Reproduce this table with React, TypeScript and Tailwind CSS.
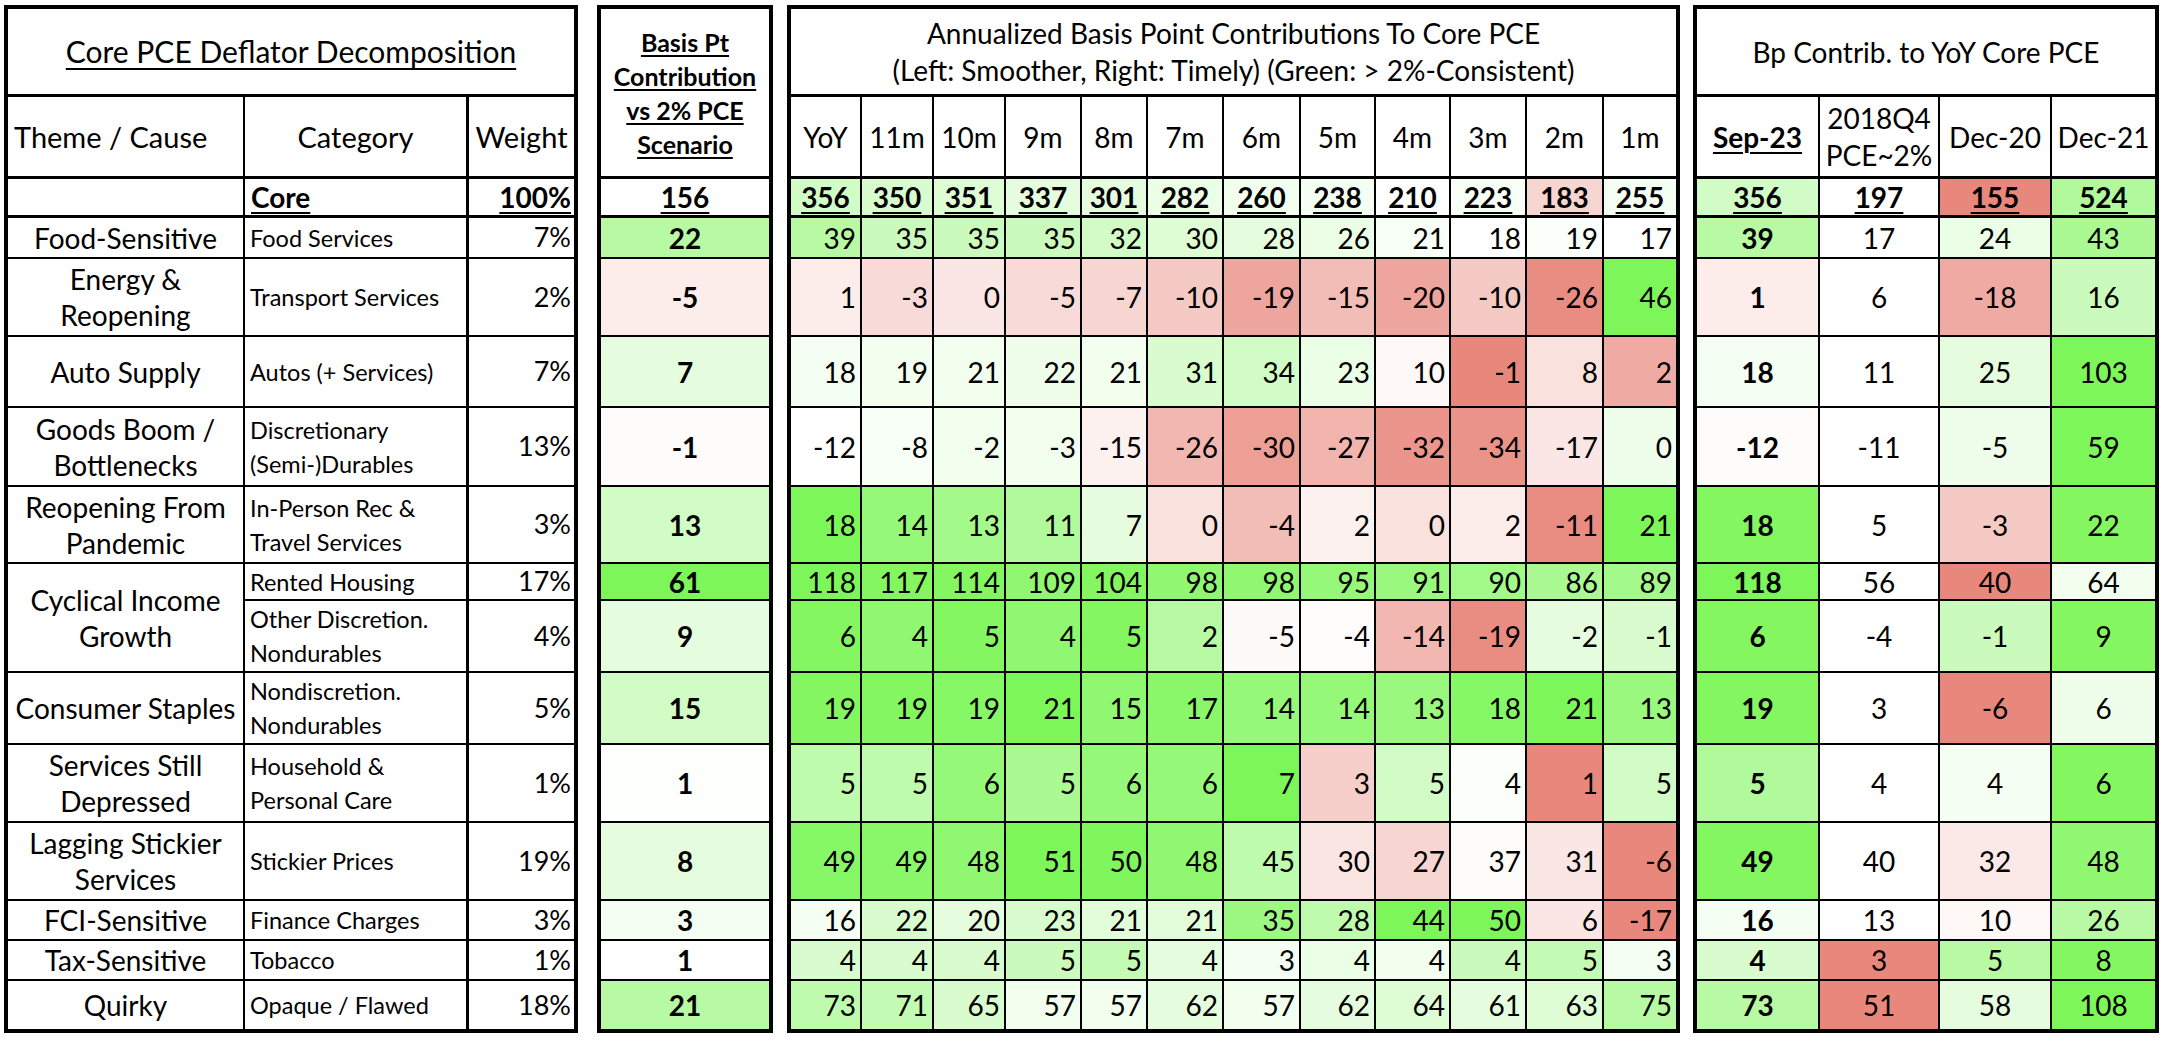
import React from 'react';

const GREEN = [124, 246, 88];
const RED = [232, 135, 124];
function bg(v: number): string {
  if (v === 0) return '#ffffff';
  const c = v > 0 ? GREEN : RED;
  const t = Math.min(1, Math.abs(v) / 100);
  const m = c.map((x) => Math.round(255 + (x - 255) * t));
  return `rgb(${m[0]},${m[1]},${m[2]})`;
}

type Row = {
  theme?: string[];
  span?: number;
  cat: string[];
  w: string;
  b: [string, number];
  a: string;
  ai: string;
  r: string;
  ri: string;
};

const rows: Row[] = [
  { theme: ['Food-Sensitive'], cat: ['Food Services'], w: '7%', b: ['22', 55], a: '39 35 35 35 32 30 28 26 21 18 19 17', ai: '55 40 40 40 35 25 20 15 5 0 3 0', r: '39 17 24 43', ri: '55 0 15 65' },
  { theme: ['Energy &', 'Reopening'], cat: ['Transport Services'], w: '2%', b: ['-5', -15], a: '1 -3 0 -5 -7 -10 -19 -15 -20 -10 -26 46', ai: '-15 -30 -20 -30 -35 -45 -75 -55 -75 -45 -95 100', r: '1 6 -18 16', ri: '-15 0 -70 40' },
  { theme: ['Auto Supply'], cat: ['Autos (+ Services)'], w: '7%', b: ['7', 20], a: '18 19 21 22 21 31 34 23 10 -1 8 2', ai: '8 10 10 12 10 30 35 15 -6 -100 -25 -70', r: '18 11 25 103', ri: '8 0 20 100' },
  { theme: ['Goods Boom /', 'Bottlenecks'], cat: ['Discretionary', '(Semi-)Durables'], w: '13%', b: ['-1', -3], a: '-12 -8 -2 -3 -15 -26 -30 -27 -32 -34 -17 0', ai: '0 5 10 10 -12 -60 -80 -62 -88 -90 -20 12', r: '-12 -11 -5 59', ri: '-3 0 12 100' },
  { theme: ['Reopening From', 'Pandemic'], cat: ['In-Person Rec &', 'Travel Services'], w: '3%', b: ['13', 35], a: '18 14 13 11 7 0 -4 2 0 2 -11 21', ai: '100 80 70 60 20 -25 -55 -12 -25 -15 -95 100', r: '18 5 -3 22', ri: '95 0 -45 95' },
  { theme: ['Cyclical Income', 'Growth'], span: 2, cat: ['Rented Housing'], w: '17%', b: ['61', 100], a: '118 117 114 109 104 98 98 95 91 90 86 89', ai: '100 95 95 85 95 85 85 80 78 72 65 70', r: '118 56 40 64', ri: '100 0 -100 10' },
  { cat: ['Other Discretion.', 'Nondurables'], w: '4%', b: ['9', 20], a: '6 4 5 4 5 2 -5 -4 -14 -19 -2 -1', ai: '95 85 95 85 95 55 -4 -2 -60 -95 20 30', r: '6 -4 -1 9', ri: '95 0 40 95' },
  { theme: ['Consumer Staples'], cat: ['Nondiscretion.', 'Nondurables'], w: '5%', b: ['15', 35], a: '19 19 19 21 15 17 14 14 13 18 21 13', ai: '95 95 92 100 85 90 80 80 78 92 100 78', r: '19 3 -6 6', ri: '95 0 -100 12' },
  { theme: ['Services Still', 'Depressed'], cat: ['Household &', 'Personal Care'], w: '1%', b: ['1', 2], a: '5 5 6 5 6 6 7 3 5 4 1 5', ai: '50 50 80 65 80 80 100 -40 35 3 -100 35', r: '5 4 4 6', ri: '60 0 8 95' },
  { theme: ['Lagging Stickier', 'Services'], cat: ['Stickier Prices'], w: '19%', b: ['8', 20], a: '49 49 48 51 50 48 45 30 27 37 31 -6', ai: '92 90 85 100 97 85 50 -22 -35 -3 -20 -100', r: '49 40 32 48', ri: '95 0 -18 85' },
  { theme: ['FCI-Sensitive'], cat: ['Finance Charges'], w: '3%', b: ['3', 8], a: '16 22 20 23 21 21 35 28 44 50 6 -17', ai: '8 30 20 30 22 22 75 50 100 100 -20 -100', r: '16 13 10 26', ri: '8 0 -6 55' },
  { theme: ['Tax-Sensitive'], cat: ['Tobacco'], w: '1%', b: ['1', 0], a: '4 4 4 5 5 4 3 4 4 4 5 3', ai: '30 30 30 40 45 20 8 15 10 40 45 8', r: '4 3 5 8', ri: '30 -100 55 95' },
  { theme: ['Quirky'], cat: ['Opaque / Flawed'], w: '18%', b: ['21', 55], a: '73 71 65 57 57 62 57 62 64 61 63 75', ai: '50 45 30 10 10 20 10 20 25 20 25 55', r: '73 51 58 108', ri: '55 -100 20 100' },
];

const core = {
  a: '356 350 351 337 301 282 260 238 210 223 183 255',
  ai: '35 30 25 20 20 15 10 8 0 5 -35 8',
  r: '356 197 155 524',
  ri: '35 0 -100 60',
};

const sp = (s: string) => s.split(' ');
const spn = (s: string) => s.split(' ').map(Number);

const ROWS =
  'grid-rows-[88px_82px_39px_41px_78px_71px_79px_77px_37px_72px_72px_78px_78px_40px_40px_48px]';

const months = ['YoY', '11m', '10m', '9m', '8m', '7m', '6m', '5m', '4m', '3m', '2m', '1m'];

export default function App() {
  const n = rows.length;
  return (
    <div className="w-[2168px] h-[1048px] bg-white text-black font-['Lato',sans-serif] overflow-hidden">
      <div className="flex items-start pt-[5px] pl-[4px]">
        {/* Panel 1 */}
        <div className={`grid w-[574px] border-[4px] border-black grid-cols-[237px_224px_105px] ${ROWS}`}>
          <div className="col-span-3 border-b-[3px] border-black flex items-center justify-center text-[30px] underline decoration-2 underline-offset-[5px]">
            Core PCE Deflator Decomposition
          </div>
          <div className="border-b-[3px] border-r-2 border-black flex items-center pl-[6px] text-[29px]">Theme / Cause</div>
          <div className="border-b-[3px] border-r-[3px] border-black flex items-center justify-center text-[29px]">Category</div>
          <div className="border-b-[3px] border-black flex items-center justify-center text-[29px]">Weight</div>
          <div className="border-b-[3px] border-r-2 border-black"></div>
          <div className="border-b-[3px] border-r-[3px] border-black flex items-center pl-[6px] text-[28px] font-bold underline decoration-2 underline-offset-[4px]">Core</div>
          <div className="border-b-[3px] border-black flex items-center justify-end pr-[3px] text-[28px] font-bold underline decoration-2 underline-offset-[4px]">100%</div>
          {rows.map((r, i) => {
            const last = i === n - 1;
            return (
              <React.Fragment key={i}>
                {r.theme && (
                  <div
                    className={`${r.span === 2 ? 'row-span-2' : ''} ${last ? '' : 'border-b-2'} border-r-2 border-black flex flex-col items-center justify-center text-center text-[28px] leading-[36px] whitespace-nowrap`}
                  >
                    {r.theme.map((t, k) => (
                      <div key={k}>{t}</div>
                    ))}
                  </div>
                )}
                <div
                  className={`${last ? '' : 'border-b-2'} border-r-[3px] border-black flex flex-col justify-center pl-[5px] text-[23.5px] leading-[34px] whitespace-nowrap`}
                >
                  {r.cat.map((t, k) => (
                    <div key={k}>{t}</div>
                  ))}
                </div>
                <div className={`${last ? '' : 'border-b-2'} border-black flex items-center justify-end pr-[3px] text-[27px]`}>
                  {r.w}
                </div>
              </React.Fragment>
            );
          })}
        </div>

        {/* Panel 2 */}
        <div className={`ml-[19px] grid w-[176px] border-[4px] border-black grid-cols-[168px] ${ROWS}`}>
          <div className="row-span-2 border-b-[3px] border-black flex flex-col items-center justify-center text-[25px] leading-[34px] font-bold underline decoration-2 underline-offset-[3px] whitespace-nowrap">
            <div>Basis Pt</div>
            <div>Contribution</div>
            <div>vs 2% PCE</div>
            <div>Scenario</div>
          </div>
          <div className="border-b-[3px] border-black flex items-center justify-center text-[28px] font-bold underline decoration-2 underline-offset-[4px]">
            156
          </div>
          {rows.map((r, i) => (
            <div
              key={i}
              className={`${i === n - 1 ? '' : 'border-b-2'} border-black flex items-center justify-center text-[28px] font-bold`}
              style={{ backgroundColor: bg(r.b[1]) }}
            >
              {r.b[0]}
            </div>
          ))}
        </div>

        {/* Panel 3 */}
        <div
          className={`ml-[14px] grid w-[893px] border-[4px] border-black grid-cols-[71px_72px_72px_76px_66px_76px_77px_75px_75px_76px_77px_72px] ${ROWS}`}
        >
          <div className="col-span-12 border-b-[3px] border-black flex flex-col items-center justify-center text-[28px] leading-[37px]">
            <div>Annualized Basis Point Contributions To Core PCE</div>
            <div>(Left: Smoother, Right: Timely) (Green: &gt; 2%-Consistent)</div>
          </div>
          {months.map((m, j) => (
            <div
              key={m}
              className={`${j === 11 ? '' : 'border-r-2'} border-b-[3px] border-black flex items-center justify-center text-[28px]`}
            >
              {m}
            </div>
          ))}
          {sp(core.a).map((v, j) => (
            <div
              key={'c' + j}
              className={`${j === 11 ? '' : 'border-r-2'} border-b-[3px] border-black flex items-center justify-center text-[28px] font-bold underline decoration-2 underline-offset-[4px]`}
              style={{ backgroundColor: bg(spn(core.ai)[j]) }}
            >
              {v}
            </div>
          ))}
          {rows.map((r, i) => {
            const vals = sp(r.a);
            const ints = spn(r.ai);
            return vals.map((v, j) => (
              <div
                key={i + '-' + j}
                className={`${j === 11 ? '' : 'border-r-2'} ${i === n - 1 ? '' : 'border-b-2'} border-black flex items-center justify-end pr-[4px] text-[28px]`}
                style={{ backgroundColor: bg(ints[j]) }}
              >
                {v}
              </div>
            ));
          })}
        </div>

        {/* Panel 4 */}
        <div className={`ml-[13px] grid w-[466px] border-[4px] border-black grid-cols-[123px_120px_112px_103px] ${ROWS}`}>
          <div className="col-span-4 border-b-[3px] border-black flex items-center justify-center text-[28px]">
            Bp Contrib. to YoY Core PCE
          </div>
          <div className="border-r-2 border-b-[3px] border-black flex items-center justify-center text-[28px] font-bold underline decoration-2 underline-offset-[4px]">
            Sep-23
          </div>
          <div className="border-r-2 border-b-[3px] border-black flex flex-col items-center justify-center text-[28px] leading-[37px]">
            <div>2018Q4</div>
            <div>PCE~2%</div>
          </div>
          <div className="border-r-2 border-b-[3px] border-black flex items-center justify-center text-[28px]">Dec-20</div>
          <div className="border-b-[3px] border-black flex items-center justify-center text-[28px]">Dec-21</div>
          {sp(core.r).map((v, j) => (
            <div
              key={'rc' + j}
              className={`${j === 3 ? '' : 'border-r-2'} border-b-[3px] border-black flex items-center justify-center text-[28px] font-bold underline decoration-2 underline-offset-[4px]`}
              style={{ backgroundColor: bg(spn(core.ri)[j]) }}
            >
              {v}
            </div>
          ))}
          {rows.map((r, i) => {
            const vals = sp(r.r);
            const ints = spn(r.ri);
            return vals.map((v, j) => (
              <div
                key={'r' + i + '-' + j}
                className={`${j === 3 ? '' : 'border-r-2'} ${i === n - 1 ? '' : 'border-b-2'} border-black flex items-center justify-center text-[28px] ${j === 0 ? 'font-bold' : ''}`}
                style={{ backgroundColor: bg(ints[j]) }}
              >
                {v}
              </div>
            ));
          })}
        </div>
      </div>
    </div>
  );
}
